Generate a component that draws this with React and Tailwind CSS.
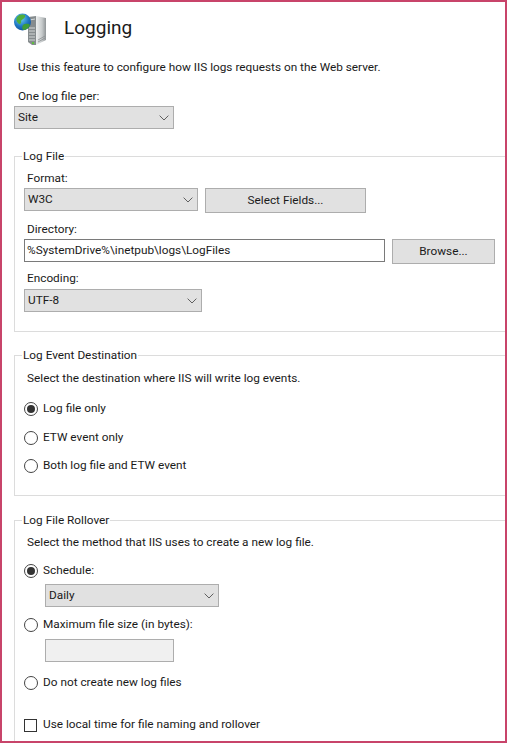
import React from 'react';

const Chevron = () => (
  <svg width="10" height="6" viewBox="0 0 10 6" fill="none" className="shrink-0">
    <path d="M0.6 0.6 L5 5 L9.4 0.6" stroke="#606060" strokeWidth="1" />
  </svg>
);

const Select = ({ value, className }) => (
  <div className={`flex h-[23px] items-center justify-between border border-[#adadad] bg-[#e1e1e1] pl-[3px] pr-[4px] ${className}`}>
    <span>{value}</span>
    <Chevron />
  </div>
);

const Button = ({ label, className }) => (
  <div className={`flex h-[25px] items-center justify-center border border-[#adadad] bg-[#e1e1e1] ${className}`}>{label}</div>
);

const Label = ({ children, className = '' }) => (
  <div className={`h-[16px] leading-[16px] whitespace-nowrap ${className}`}>{children}</div>
);

const Radio = ({ label, checked, className = '' }) => (
  <div className={`flex h-[16px] items-center gap-[5px] ${className}`}>
    <span className="flex h-[14px] w-[14px] items-center justify-center rounded-full border border-[#444] bg-white">
      {checked && <span className="h-[8px] w-[8px] rounded-full bg-[#333]"></span>}
    </span>
    <span className="whitespace-nowrap">{label}</span>
  </div>
);

const Group = ({ title, className = '', children }) => (
  <fieldset className={`ml-[12px] border-l border-t border-[#dcdcdc] pl-[9px] ${className}`}>
    <legend className="ml-[-2px] h-[16px] px-[1px] leading-[16px] whitespace-nowrap">{title}</legend>
    {children}
  </fieldset>
);

const ServerIcon = () => (
  <svg width="34" height="34" viewBox="0 0 34 34" className="shrink-0">
    <defs>
      <linearGradient id="tower" x1="0" y1="0" x2="1" y2="0">
        <stop offset="0" stopColor="#eef0f0" />
        <stop offset="0.6" stopColor="#c6cacb" />
        <stop offset="1" stopColor="#8f9496" />
      </linearGradient>
      <radialGradient id="globe" cx="0.4" cy="0.3" r="0.75">
        <stop offset="0" stopColor="#6fd0f2" />
        <stop offset="0.6" stopColor="#1f78c4" />
        <stop offset="1" stopColor="#124f96" />
      </radialGradient>
    </defs>
    <path d="M22 4 L32 6 L32 28 L22 33 Z" fill="url(#tower)" />
    <path d="M14 5 L22 4 L22 33 L18 33 L14 30 Z" fill="#868c8e" />
    <path d="M24 28 L31 24 M24 30 L31 26" stroke="#8a8e90" strokeWidth="0.8" />
    <path d="M15 8 L21 7 M15 16 L21 16 M15 19 L21 19 M15 22 L21 22 M15 25 L21 25 M15 28 L21 28" stroke="#d4d8d8" strokeWidth="1" />
    <rect x="18" y="30" width="2" height="2" fill="#5fbf3f" />
    <circle cx="8.5" cy="10" r="8.5" fill="url(#globe)" />
    <path d="M3 5 C5 2 9 2 11 3 C12 6 8 7 7 9 C8 12 5 13 4 11 C2 9 2 7 3 5 Z" fill="#4fae3c" />
    <path d="M9 13 C12 11 15 12 16 13 C15 16 12 18 9 18 C8 16 8 15 9 13 Z" fill="#3f9c38" />
  </svg>
);

export default function App() {
  return (
    <div className="h-[743px] w-[507px] overflow-hidden border-2 border-[#c8446a] bg-white text-[11.8px] text-[#1a1a1a] [font-family:Roboto,sans-serif]">
      <div className="flex h-[50px] items-center pl-[12px] pt-[3px]">
        <ServerIcon />
        <h1 className="ml-[16px] pb-[2px] text-[19px] font-normal leading-[24px]">Logging</h1>
      </div>
      <Label className="ml-[16px] mt-[7px]">Use this feature to configure how IIS logs requests on the Web server.</Label>
      <Label className="ml-[16px] mt-[13px]">One log file per:</Label>
      <Select value="Site" className="ml-[12px] mt-[2px] w-[160px]" />

      <Group title="Log File" className="mt-[19px] h-[184px] border-b">
        <Label className="ml-[3px] mt-[6px]">Format:</Label>
        <div className="mt-[2px] flex gap-[7px]">
          <Select value="W3C" className="w-[174px]" />
          <Button label="Select Fields..." className="w-[161px]" />
        </div>
        <Label className="ml-[3px] mt-[8px]">Directory:</Label>
        <div className="mt-[2px] flex gap-[7px]">
          <div className="flex h-[23px] w-[361px] items-center border border-[#7a7a7a] bg-white pl-[2px]">%SystemDrive%\inetpub\logs\LogFiles</div>
          <Button label="Browse..." className="w-[103px]" />
        </div>
        <Label className="ml-[3px] mt-[6px]">Encoding:</Label>
        <Select value="UTF-8" className="mt-[3px] w-[178px]" />
      </Group>

      <Group title="Log Event Destination" className="mt-[15px] h-[149px] border-b">
        <Label className="ml-[3px] mt-[7px]">Select the destination where IIS will write log events.</Label>
        <Radio label="Log file only" checked className="mt-[15px]" />
        <Radio label="ETW event only" className="mt-[13px]" />
        <Radio label="Both log file and ETW event" className="mt-[12px]" />
      </Group>

      <Group title="Log File Rollover" className="mt-[16px] h-[241px]">
        <Label className="ml-[3px] mt-[6px]">Select the method that IIS uses to create a new log file.</Label>
        <Radio label="Schedule:" checked className="mt-[13px]" />
        <Select value="Daily" className="ml-[21px] mt-[5px] w-[174px]" />
        <Radio label="Maximum file size (in bytes):" className="mt-[10px]" />
        <div className="ml-[21px] mt-[6px] h-[23px] w-[129px] border border-[#adadad] bg-[#f0f0f0]"></div>
        <Radio label="Do not create new log files" className="mt-[13px]" />
        <div className="mt-[26px] flex h-[16px] items-center gap-[6px]">
          <span className="h-[13px] w-[13px] border border-[#333] bg-white"></span>
          <span className="whitespace-nowrap">Use local time for file naming and rollover</span>
        </div>
      </Group>
    </div>
  );
}
